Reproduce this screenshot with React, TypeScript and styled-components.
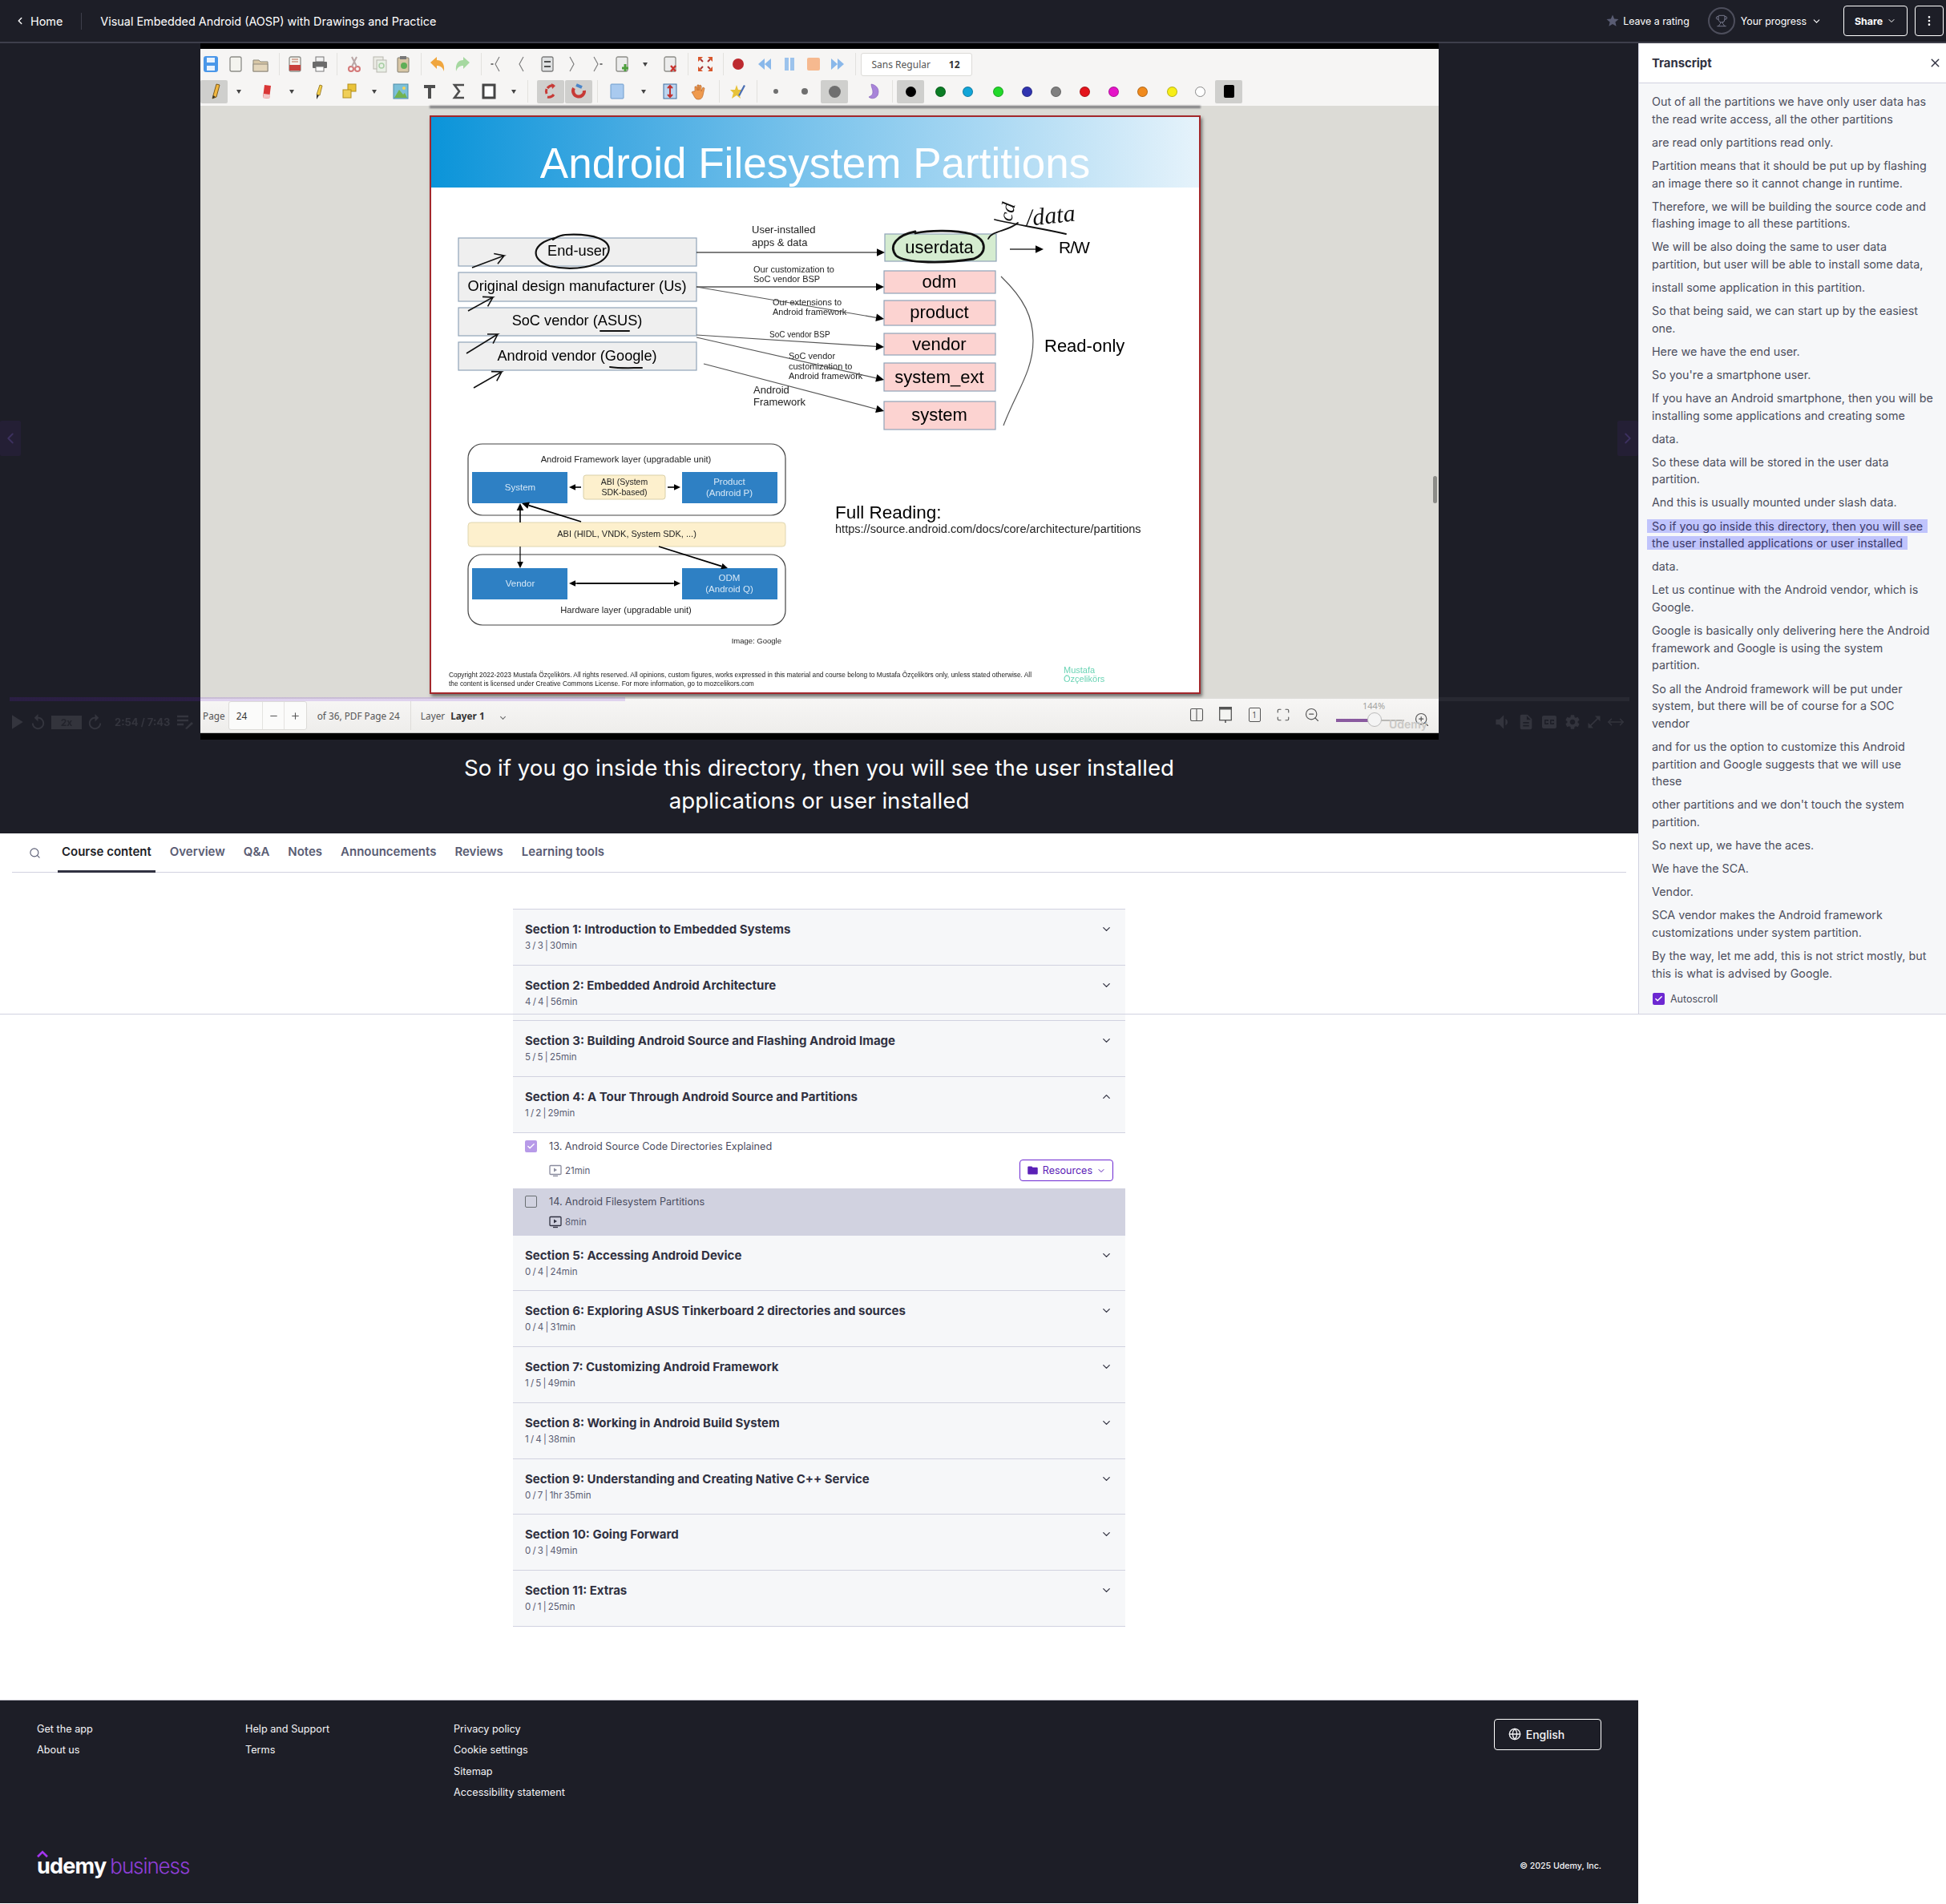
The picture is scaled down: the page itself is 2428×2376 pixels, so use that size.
import React from 'react';
import styled, { createGlobalStyle } from 'styled-components';
import {
  Check,
  ChevronDown,
  ChevronLeft,
  ChevronUp,
  Columns2,
  EllipsisVertical,
  Globe,
  Maximize,
  Minus,
  MoveHorizontal,
  Plus,
  Search,
  Trophy,
  X,
  ZoomIn,
  ZoomOut,
} from 'lucide-react';
import {
  MdClosedCaption,
  MdDescription,
  MdFolder,
  MdOpenInFull,
  MdPlayArrow,
  MdReplay,
  MdSettings,
  MdStar,
  MdVolumeDown,
} from 'react-icons/md';

const DARK = '#1d1e27';
const LINE = '#d1d2e0';
const PURPLE = '#6d28d2';

const GlobalStyle = createGlobalStyle`
  html, body {
    margin: 0;
    background: #fff;
    font-family: Inter, "Noto Sans", sans-serif;
    color: #303141;
  }
  * { box-sizing: border-box; }
`;

/* ---------- pdf app toolbar icons ---------- */

const Page = (fill = '#f4f4ef', stroke = '#8d8d88') => (
  <rect x="4" y="2" width="14" height="18" rx="2" fill={fill} stroke={stroke} strokeWidth="1.3" />
);

const toolIcons: Record<string, React.ReactNode> = {
  save: (
    <>
      <rect x="2" y="1" width="18" height="20" rx="3" fill="#4a97e9" />
      <rect x="6" y="3" width="10" height="6" fill="#eaf3fd" />
      <rect x="6" y="13" width="10" height="6" fill="#eaf3fd" />
    </>
  ),
  page: Page(),
  folder: (
    <>
      <path d="M2 6h7l2 2h9v12H2z" fill="#d8c7a6" stroke="#8f8a7c" />
      <rect x="2" y="11" width="18" height="9" fill="#e4d6bb" stroke="#8f8a7c" />
    </>
  ),
  pdf: (
    <>
      {Page()}
      <rect x="4" y="12" width="14" height="7" fill="#c9413d" />
      <path d="M7 5h8M7 8h8" stroke="#c98" strokeWidth="1.5" />
    </>
  ),
  print: (
    <>
      <rect x="6" y="2" width="10" height="6" fill="#f2f2f2" stroke="#777" />
      <rect x="2" y="8" width="18" height="8" rx="1" fill="#6b6b6b" />
      <rect x="6" y="14" width="10" height="6" fill="#fff" stroke="#777" />
    </>
  ),
  cut: (
    <>
      <circle cx="7" cy="17" r="3" fill="none" stroke="#d47878" strokeWidth="2" />
      <circle cx="15" cy="17" r="3" fill="none" stroke="#d47878" strokeWidth="2" />
      <path d="M8 14 14 2M14 14 8 2" stroke="#b9a6a6" strokeWidth="2" />
    </>
  ),
  copy: (
    <>
      <rect x="3" y="2" width="12" height="15" fill="#ecece6" stroke="#b7b7ae" />
      <rect x="7" y="6" width="12" height="15" fill="#e9efe6" stroke="#b7b7ae" />
      <circle cx="13" cy="13" r="3" fill="none" stroke="#a8cfa4" strokeWidth="1.5" />
    </>
  ),
  paste: (
    <>
      <rect x="4" y="3" width="14" height="18" rx="1" fill="#d8c7a6" stroke="#807a6c" />
      <rect x="7" y="1" width="8" height="4" fill="#777" />
      <circle cx="12" cy="13" r="4" fill="#5fae57" />
    </>
  ),
  undo: <path d="M2 9 10 2v4c6 0 10 4 9 14-2-5-4-7-9-7v4z" fill="#f0a63e" />,
  redo: <path d="M20 9 12 2v4C6 6 2 10 3 20c2-5 4-7 9-7v4z" fill="#a6d8a0" />,
  first: <path d="M15 2 10 11l5 9M5 10.5h2v1H5z" fill="none" stroke="#777" strokeWidth="1.1" />,
  prev: <path d="M14 2 9 11l5 9" fill="none" stroke="#777" strokeWidth="1.1" />,
  next: <path d="m8 2 5 9-5 9" fill="none" stroke="#777" strokeWidth="1.1" />,
  last: <path d="m7 2 5 9-5 9M15 10.5h2v1h-2z" fill="none" stroke="#777" strokeWidth="1.1" />,
  center: (
    <>
      {Page('#dfe1e2', '#7c7c7c')}
      <path d="M7 8h8M15 14H7" stroke="#222" strokeWidth="1.6" />
    </>
  ),
  addPage: (
    <>
      {Page('#ececec')}
      <path d="M15 11v9M11 16h8" stroke="#4e9f3d" strokeWidth="3" />
    </>
  ),
  delPage: (
    <>
      {Page('#ececec')}
      <path d="m12 13 6 7M18 13l-6 7" stroke="#c9332f" strokeWidth="2.4" />
    </>
  ),
  full: (
    <>
      <path d="M2 2h6L2 8zM20 2h-6l6 6zM2 20h6l-6-6zM20 20h-6l6-6z" fill="#d9572b" />
      <path d="m5 5 3 3M17 5l-3 3M5 17l3-3M17 17l-3-3" stroke="#a33" strokeWidth="2" />
    </>
  ),
  record: <circle cx="11" cy="11" r="7" fill="#bd2a2f" />,
  rewind: <path d="M11 4v14L3 11zM19 4v14l-8-7z" fill="#8ab8ea" />,
  pause: <path d="M5 3h5v16H5zM12 3h5v16h-5z" fill="#9cc3ec" />,
  stop: <rect x="3" y="3" width="16" height="16" rx="2" fill="#f6b98f" />,
  forward: <path d="M3 4v14l8-7zM11 4v14l8-7z" fill="#8ab8ea" />,
  pen: (
    <>
      <path d="m9 20 1-4 4-14 4 1-4 15z" fill="#f2b73f" stroke="#7a5a1c" />
      <path d="m9 20 1-4 3 2z" fill="#333" />
    </>
  ),
  eraser: (
    <>
      <path d="m6 19 2-16 8 1-2 16z" fill="#d93636" />
      <path d="m6 19 1-5 8 1-1 5z" fill="#f3c6c6" />
    </>
  ),
  marker: (
    <>
      <path d="m9 15 4-12 3 1-3 12z" fill="#f5cf4a" stroke="#8a6d1c" strokeWidth=".8" />
      <path d="m9 15 3 1-3 5z" fill="#333" />
    </>
  ),
  select: (
    <>
      <rect x="9" y="2" width="10" height="9" fill="#eac339" stroke="#b28f1c" />
      <rect x="3" y="9" width="10" height="10" fill="#f0cf58" stroke="#b28f1c" />
    </>
  ),
  image: (
    <>
      <rect x="2" y="2" width="18" height="18" fill="#7cc0d8" stroke="#4d8ba8" />
      <path d="M3 19 9 9l5 6 2-2 3 6z" fill="#72b34f" />
      <circle cx="15" cy="7" r="2" fill="#f4d35e" />
    </>
  ),
  tee: <path d="M4 3h14v4h-5v13H9V7H4z" fill="#4e4e4e" />,
  sigma: <path d="M17 3H5l6 8-6 8h12" fill="none" stroke="#4e4e4e" strokeWidth="2.6" />,
  shape: <rect x="4" y="3" width="14" height="16" fill="#fff" stroke="#444" strokeWidth="3" />,
  rotate: (
    <>
      <path d="M15 4a8 8 0 0 0-8 3" fill="none" stroke="#c73a36" strokeWidth="3" />
      <path d="M7 18a8 8 0 0 0 8-3M6 8a8 8 0 0 0 0 6" fill="none" stroke="#c73a36" strokeWidth="3" />
      <path d="m12 1 5 3-4 4z" fill="#c73a36" />
    </>
  ),
  magnet: (
    <>
      <path d="M5 7a7 7 0 1 0 13 3" fill="none" stroke="#c73a36" strokeWidth="4" />
      <path d="M8 3l7 3" stroke="#4a85c9" strokeWidth="4" />
    </>
  ),
  blue: <rect x="3" y="2" width="16" height="18" rx="1" fill="#a9caef" stroke="#6f9ccc" />,
  updown: (
    <>
      <rect x="3" y="2" width="16" height="18" fill="#bcd4ef" stroke="#3f6f9f" />
      <path d="M11 4v14M8 7l3-3 3 3M8 15l3 3 3-3" fill="none" stroke="#c0312e" strokeWidth="2" />
    </>
  ),
  hand: (
    <>
      <path d="M5 11V5l2 0 1 5V3h2v7l1-7 2 1v7l2-5 2 1-2 9c-1 4-3 5-6 5s-4-2-6-6l-2-3 2-1z" fill="#ef9a4d" stroke="#b9662a" strokeWidth=".7" />
    </>
  ),
  starPen: (
    <>
      <path d="m9 3 2 6 6 0-5 4 2 7-5-4-6 4 2-7-4-4 6 0z" fill="#e7c23a" />
      <path d="m11 16 7-13 2 1-7 13z" fill="#4b6fb3" />
    </>
  ),
  lasso: <path d="M9 2c7 1 11 7 8 14-2 4-8 5-11 2 2-1 5-2 5-6 0-4-2-6-2-10z" fill="#a884d9" stroke="#7c58b4" strokeWidth=".6" />,
};

type Tool = { c: number; kind: string; active?: boolean; dot?: string; r?: number };

const sep = (c: number): Tool => ({ c, kind: 'sep' });
const caret = (c: number): Tool => ({ c, kind: 'caret' });
const dot = (c: number, color: string, active?: boolean): Tool => ({ c, kind: 'dot', dot: color, active });
const tool = (c: number, kind: string, active?: boolean): Tool => ({ c, kind, active });

const rowOne: Tool[] = [
  tool(263, 'save'), tool(294, 'page'), tool(325, 'folder'), sep(348), tool(368, 'pdf'), tool(399, 'print'), sep(420),
  tool(442, 'cut'), tool(474, 'copy'), tool(503, 'paste'), sep(525), tool(546, 'undo'), tool(577, 'redo'), sep(600),
  tool(619, 'first'), tool(650, 'prev'), tool(683, 'center'), tool(714, 'next'), tool(745, 'last'), tool(776, 'addPage'),
  caret(805), tool(836, 'delPage'), sep(858), tool(880, 'full'), sep(902), tool(921, 'record'), tool(954, 'rewind'),
  tool(985, 'pause'), tool(1015, 'stop'), tool(1045, 'forward'), sep(1067),
];

const rowTwo: Tool[] = [
  tool(267, 'pen', true), caret(298), tool(333, 'eraser'), caret(364), tool(397, 'marker'), tool(436, 'select'), caret(467),
  tool(500, 'image'), tool(536, 'tee'), tool(573, 'sigma'), tool(610, 'shape'), caret(641), sep(658), tool(687, 'rotate', true),
  tool(722, 'magnet', true), sep(745), tool(770, 'blue'), caret(803), tool(836, 'updown'), tool(873, 'hand'), sep(897),
  tool(921, 'starPen'), sep(944), { c: 968, kind: 'size', r: 3 }, { c: 1004, kind: 'size', r: 4 },
  { c: 1041, kind: 'size', r: 7.5, active: true }, tool(1089, 'lasso'), sep(1113), dot(1136, '#000', true), dot(1173, '#0b7d25'),
  dot(1207, '#12a5d8'), dot(1245, '#22d92a'), dot(1281, '#3134b0'), dot(1317, '#808080'), dot(1353, '#e3141c'),
  dot(1389, '#e514c8'), dot(1425, '#f08a1d'), dot(1462, '#f7ee17'), dot(1497, '#fff'), tool(1533, 'black', true),
];

const widthOf = (t: Tool) => {
  if (t.kind === 'sep') return 1;
  if (t.kind === 'caret') return 10;
  if (t.active) return 34;
  return 24;
};

function ToolRow({ items }: { items: Tool[] }) {
  let right = 250;
  return (
    <ToolStrip>
      {items.map((t, i) => {
        const w = widthOf(t);
        const ml = t.c - w / 2 - right;
        right = t.c + w / 2;
        if (t.kind === 'sep') return <ToolSep key={i} $ml={ml} />;
        if (t.kind === 'caret') return <ToolCaret key={i} $ml={ml} />;
        return (
          <ToolFace key={i} $ml={ml} $w={w} $active={t.active}>
            {t.kind === 'black' ? (
              <BlackSwatch />
            ) : t.kind === 'dot' ? (
              <ColorDot $color={t.dot as string} />
            ) : t.kind === 'size' ? (
              <SizeDot $r={t.r as number} />
            ) : (
              <svg width="22" height="22" viewBox="0 0 22 22">
                {toolIcons[t.kind]}
              </svg>
            )}
          </ToolFace>
        );
      })}
    </ToolStrip>
  );
}

/* ---------- the slide diagram ---------- */

function Arrow({ x1, y1, x2, y2, color = '#000', w = 1.2, head = 10 }: { x1: number; y1: number; x2: number; y2: number; color?: string; w?: number; head?: number }) {
  const a = Math.atan2(y2 - y1, x2 - x1);
  const bx = x2 - Math.cos(a) * head;
  const by = y2 - Math.sin(a) * head;
  const nx = -Math.sin(a) * head * 0.48;
  const ny = Math.cos(a) * head * 0.48;
  return (
    <>
      <line x1={x1} y1={y1} x2={bx} y2={by} stroke={color} strokeWidth={w} />
      <polygon points={`${x2},${y2} ${bx + nx},${by + ny} ${bx - nx},${by - ny}`} fill="#000" />
    </>
  );
}

function Stroke({ x1, y1, x2, y2 }: { x1: number; y1: number; x2: number; y2: number }) {
  const a = Math.atan2(y2 - y1, x2 - x1);
  const p = (d: number, s: number) => `${x2 - Math.cos(a + s) * d},${y2 - Math.sin(a + s) * d}`;
  return <polyline points={`${x1},${y1} ${x2},${y2} ${p(13, 0.55)} ${x2},${y2} ${p(13, -0.55)}`} fill="none" stroke="#111" strokeWidth="1.6" />;
}

const actors = [
  { y: 296, h: 35, label: 'End-user', ty: 313 },
  { y: 339, h: 36, label: 'Original design manufacturer (Us)', ty: 357 },
  { y: 383, h: 35, label: 'SoC vendor (ASUS)', ty: 400 },
  { y: 426, h: 35, label: 'Android vendor (Google)', ty: 444 },
];

const partitions = [
  { y: 291, h: 34, x: 1104, w: 139, label: 'userdata', fill: '#d5ecd0', ty: 309 },
  { y: 337, h: 28, x: 1103, w: 139, label: 'odm', fill: '#fcd3d1', ty: 352 },
  { y: 374, h: 31, x: 1103, w: 139, label: 'product', fill: '#fcd3d1', ty: 390 },
  { y: 415, h: 27, x: 1103, w: 139, label: 'vendor', fill: '#fcd3d1', ty: 430 },
  { y: 452, h: 35, x: 1103, w: 139, label: 'system_ext', fill: '#fcd3d1', ty: 471 },
  { y: 500, h: 35, x: 1103, w: 139, label: 'system', fill: '#fcd3d1', ty: 518 },
];

const labels: [number, number, number, string][] = [
  [938, 287, 13, 'User-installed'],
  [938, 303, 13, 'apps & data'],
  [940, 336, 11, 'Our customization to'],
  [940, 348, 11, 'SoC vendor BSP'],
  [964, 377, 11, 'Our extensions to'],
  [964, 389, 11, 'Android framework'],
  [960, 417, 10, 'SoC vendor BSP'],
  [984, 444, 11, 'SoC vendor'],
  [984, 457, 11, 'customization to'],
  [984, 469, 11, 'Android framework'],
  [940, 487, 13, 'Android'],
  [940, 502, 13, 'Framework'],
];

function SlideDiagram() {
  return (
    <svg width="962" height="632" viewBox="536 233 962 632">
      {actors.map(a => (
        <g key={a.label}>
          <rect x="572" y={a.y} width="297" height={a.h} fill="#efefef" stroke="#8fa3b8" strokeWidth="1.2" />
          <DiagramText x="720" y={a.ty} $size={18.2} $anchor="middle">{a.label}</DiagramText>
        </g>
      ))}
      {partitions.map(p => (
        <g key={p.label}>
          <rect x={p.x} y={p.y} width={p.w} height={p.h} fill={p.fill} stroke="#8fa3b8" strokeWidth="1.2" />
          <DiagramText x="1172" y={p.ty} $size={22} $anchor="middle">{p.label}</DiagramText>
        </g>
      ))}
      {labels.map(([x, y, s, t], i) => (
        <DiagramText key={i} x={x} y={y} $size={s} $color="#222">{t}</DiagramText>
      ))}
      <Arrow x1={869} y1={314} x2={1104} y2={314} />
      <Arrow x1={869} y1={357} x2={1103} y2={357} />
      <Arrow x1={869} y1={357} x2={1103} y2={397} color="#555" />
      <Arrow x1={869} y1={417} x2={1103} y2={432} color="#555" />
      <Arrow x1={869} y1={420} x2={1103} y2={473} color="#555" />
      <Arrow x1={878} y1={453} x2={1103} y2={512} color="#555" />
      <Arrow x1={1260} y1={310} x2={1302} y2={310} />
      <path d="M1249 344C1278 372 1289 395 1289 424C1289 462 1268 488 1252 530" fill="none" stroke="#555" strokeWidth="1.2" />
      <DiagramText x="1321" y="309" $size={21} $letter={-1}>R/W</DiagramText>
      <DiagramText x="1303" y="432" $size={22}>Read-only</DiagramText>

      <Hand d="M692 296C664 303 660 322 686 331C712 337 752 334 759 314C764 298 740 290 705 292C700 293 696 293 690 298" $w={2.2} />
      <Hand d="M1142 288C1120 292 1108 305 1118 318C1130 328 1180 328 1215 322C1232 315 1232 298 1212 291C1192 286 1160 286 1142 290" $w={2.8} />
      <Hand d="M1233 297C1238 286 1258 288 1270 277M1241 273C1270 280 1300 284 1330 291" $w={1.8} />
      <Hand d="M749 412H785M761 457C775 459 788 458 801 458" $w={2} />
      <Stroke x1={589} y1={333} x2={629} y2={318} />
      <Stroke x1={584} y1={387} x2={615} y2={370} />
      <Stroke x1={582} y1={440} x2={621} y2={416} />
      <Stroke x1={591} y1={483} x2={626} y2={463} />
      <HandText x="1262" y="276" $size={24} transform="rotate(-78 1262 276)">cd</HandText>
      <HandText x="1281" y="281" $size={30} transform="rotate(-6 1281 281)">/data</HandText>

      <rect x="584" y="553" width="396" height="89" rx="18" fill="#fff" stroke="#444" strokeWidth="1.2" />
      <rect x="584" y="691" width="396" height="88" rx="18" fill="#fff" stroke="#444" strokeWidth="1.2" />
      <DiagramText x="781" y="573" $size={11.2} $anchor="middle" $color="#222">Android Framework layer (upgradable unit)</DiagramText>
      <DiagramText x="781" y="761" $size={11.2} $anchor="middle" $color="#222">Hardware layer (upgradable unit)</DiagramText>
      <rect x="589" y="588" width="119" height="39" fill="#2e80c4" />
      <rect x="851" y="588" width="119" height="39" fill="#2e80c4" />
      <rect x="589" y="708" width="119" height="39" fill="#2e80c4" />
      <rect x="851" y="708" width="119" height="39" fill="#2e80c4" />
      <rect x="728" y="592" width="102" height="30" rx="3" fill="#fdf0cd" stroke="#d9cfa8" />
      <rect x="584" y="651" width="396" height="30" rx="4" fill="#fdf0cd" stroke="#e0d6b0" />
      <DiagramText x="649" y="608" $size={11.5} $anchor="middle" $color="#d6e7f6">System</DiagramText>
      <DiagramText x="910" y="601" $size={11.5} $anchor="middle" $color="#d6e7f6">Product</DiagramText>
      <DiagramText x="910" y="615" $size={11.5} $anchor="middle" $color="#d6e7f6">(Android P)</DiagramText>
      <DiagramText x="649" y="728" $size={11.5} $anchor="middle" $color="#d6e7f6">Vendor</DiagramText>
      <DiagramText x="910" y="721" $size={11.5} $anchor="middle" $color="#d6e7f6">ODM</DiagramText>
      <DiagramText x="910" y="735" $size={11.5} $anchor="middle" $color="#d6e7f6">(Android Q)</DiagramText>
      <DiagramText x="779" y="601" $size={10.5} $anchor="middle" $color="#222">ABI (System</DiagramText>
      <DiagramText x="779" y="614" $size={10.5} $anchor="middle" $color="#222">SDK-based)</DiagramText>
      <DiagramText x="782" y="666" $size={11} $anchor="middle" $color="#222">ABI (HIDL, VNDK, System SDK, ...)</DiagramText>
      <Arrow x1={725} y1={607} x2={710} y2={607} w={1.6} head={8} />
      <Arrow x1={833} y1={607} x2={849} y2={607} w={1.6} head={8} />
      <Arrow x1={649} y1={651} x2={649} y2={627} w={1.6} head={9} />
      <Arrow x1={725} y1={650} x2={651} y2={627} w={1.8} head={9} />
      <Arrow x1={649} y1={681} x2={649} y2={708} w={1.2} head={8} />
      <Arrow x1={822} y1={681} x2={908} y2={708} w={1.8} head={8} />
      <Arrow x1={720} y1={727} x2={849} y2={727} w={1.6} head={8} />
      <Arrow x1={840} y1={727} x2={710} y2={727} w={1.6} head={8} />
      <DiagramText x="975" y="799" $size={9.5} $anchor="end" $color="#222">Image: Google</DiagramText>
      <DiagramText x="1042" y="640" $size={22.5}>Full Reading:</DiagramText>
      <DiagramText x="1042" y="660" $size={14.55} $color="#222">https://source.android.com/docs/core/architecture/partitions</DiagramText>
      <DiagramText x="560" y="842" $size={8.36} $color="#222">Copyright 2022-2023 Mustafa Özçelikörs. All rights reserved. All opinions, custom figures, works expressed in this material and course belong to Mustafa Özçelikörs only, unless stated otherwise. All</DiagramText>
      <DiagramText x="560" y="853" $size={8.36} $color="#222">the content is licensed under Creative Commons License. For more information, go to mozcelikors.com</DiagramText>
      <DiagramText x="1327" y="836" $size={11} $color="#6bd4b5">Mustafa</DiagramText>
      <DiagramText x="1327" y="847" $size={11} $color="#6bd4b5">Özçelikörs</DiagramText>
    </svg>
  );
}

/* ---------- data ---------- */

const tabs = ['Course content', 'Overview', 'Q&A', 'Notes', 'Announcements', 'Reviews', 'Learning tools'];

type Lecture = { title: string; length: string; done?: boolean; current?: boolean };
type Section = { title: string; meta: string; lectures?: Lecture[] };

const sections: Section[] = [
  { title: 'Section 1: Introduction to Embedded Systems', meta: '3 / 3 | 30min' },
  { title: 'Section 2: Embedded Android Architecture', meta: '4 / 4 | 56min' },
  { title: 'Section 3: Building Android Source and Flashing Android Image', meta: '5 / 5 | 25min' },
  {
    title: 'Section 4: A Tour Through Android Source and Partitions',
    meta: '1 / 2 | 29min',
    lectures: [
      { title: '13. Android Source Code Directories Explained', length: '21min', done: true },
      { title: '14. Android Filesystem Partitions', length: '8min', current: true },
    ],
  },
  { title: 'Section 5: Accessing Android Device', meta: '0 / 4 | 24min' },
  { title: 'Section 6: Exploring ASUS Tinkerboard 2 directories and sources', meta: '0 / 4 | 31min' },
  { title: 'Section 7: Customizing Android Framework', meta: '1 / 5 | 49min' },
  { title: 'Section 8: Working in Android Build System', meta: '1 / 4 | 38min' },
  { title: 'Section 9: Understanding and Creating Native C++ Service', meta: '0 / 7 | 1hr 35min' },
  { title: 'Section 10: Going Forward', meta: '0 / 3 | 49min' },
  { title: 'Section 11: Extras', meta: '0 / 1 | 25min' },
];

const cues: { lines: string[]; current?: boolean }[] = [
  { lines: ['Out of all the partitions we have only user data has', 'the read write access, all the other partitions'] },
  { lines: ['are read only partitions read only.'] },
  { lines: ['Partition means that it should be put up by flashing', 'an image there so it cannot change in runtime.'] },
  { lines: ['Therefore, we will be building the source code and', 'flashing image to all these partitions.'] },
  { lines: ['We will be also doing the same to user data', 'partition, but user will be able to install some data,'] },
  { lines: ['install some application in this partition.'] },
  { lines: ['So that being said, we can start up by the easiest', 'one.'] },
  { lines: ['Here we have the end user.'] },
  { lines: ["So you're a smartphone user."] },
  { lines: ['If you have an Android smartphone, then you will be', 'installing some applications and creating some'] },
  { lines: ['data.'] },
  { lines: ['So these data will be stored in the user data', 'partition.'] },
  { lines: ['And this is usually mounted under slash data.'] },
  { lines: ['So if you go inside this directory, then you will see', 'the user installed applications or user installed'], current: true },
  { lines: ['data.'] },
  { lines: ['Let us continue with the Android vendor, which is', 'Google.'] },
  { lines: ['Google is basically only delivering here the Android', 'framework and Google is using the system', 'partition.'] },
  { lines: ['So all the Android framework will be put under', 'system, but there will be of course for a SOC', 'vendor'] },
  { lines: ['and for us the option to customize this Android', 'partition and Google suggests that we will use', 'these'] },
  { lines: ["other partitions and we don't touch the system", 'partition.'] },
  { lines: ['So next up, we have the aces.'] },
  { lines: ['We have the SCA.'] },
  { lines: ['Vendor.'] },
  { lines: ['SCA vendor makes the Android framework', 'customizations under system partition.'] },
  { lines: ['By the way, let me add, this is not strict mostly, but', 'this is what is advised by Google.'] },
];

const footerColumns = [
  ['Get the app', 'About us'],
  ['Help and Support', 'Terms'],
  ['Privacy policy', 'Cookie settings', 'Sitemap', 'Accessibility statement'],
];

function LectureIcon({ strong }: { strong?: boolean }) {
  const c = strong ? '#303141' : '#8a8c9e';
  return (
    <svg width="16" height="16" viewBox="0 0 16 16">
      <rect x="1" y="1.5" width="14" height="11" rx="1" fill="none" stroke={c} strokeWidth="1.3" />
      <path d="M6 4.5v5l4-2.5z" fill={c} />
      <path d="M5 14.5h6" stroke={c} strokeWidth="1.3" />
    </svg>
  );
}

function NotesIcon() {
  return (
    <svg width="22" height="20" viewBox="0 0 22 20">
      <path d="M1 3h14M1 8h14M1 13h8" stroke="#34353e" strokeWidth="2.4" />
      <path d="m11 18 8-8 2 2-8 7z" fill="#34353e" />
    </svg>
  );
}

function PresentationIcon() {
  return (
    <svg width="20" height="24" viewBox="0 0 20 24">
      <rect x="2.7" y="2.7" width="14.6" height="16" fill="#f4f4f2" stroke="#555" strokeWidth="1.3" />
      <rect x="2" y="2" width="16" height="3.5" fill="#555" />
      <path d="M10 19v3" stroke="#555" strokeWidth="1.6" />
    </svg>
  );
}

export default function App() {
  return (
    <>
      <GlobalStyle />
      <Shell>
        <TopBar>
          <BackLink>
            <ChevronLeft size={14} strokeWidth={2.4} />
            Home
          </BackLink>
          <TopDivider />
          <CourseTitle>Visual Embedded Android (AOSP) with Drawings and Practice</CourseTitle>
          <TopActions>
            <RatingLink>
              <MdStar size={18} color="#595c73" />
              Leave a rating
            </RatingLink>
            <ProgressLink>
              <ProgressRing>
                <Trophy size={16} color="#7c7e92" strokeWidth={1.4} />
              </ProgressRing>
              Your progress
              <ChevronDown size={13} />
            </ProgressLink>
            <OutlineButton $w={80} $ml={31}>
              Share
              <ChevronDown size={12} />
            </OutlineButton>
            <OutlineButton $w={36} $ml={9}>
              <EllipsisVertical size={16} />
            </OutlineButton>
          </TopActions>
        </TopBar>

        <Body>
          <Main>
            <Stage>
              <PdfWindow>
                <ToolBar>
                  <FontRow>
                    <ToolRow items={rowOne} />
                    <FontBox>
                      <span>Sans Regular</span>
                      <b>12</b>
                    </FontBox>
                  </FontRow>
                  <ToolRow items={rowTwo} />
                </ToolBar>
                <Canvas>
                  <PrevPageEdge />
                  <Slide>
                    <SlideHead>Android Filesystem Partitions</SlideHead>
                    <SlideDiagram />
                  </Slide>
                  <ScrollThumb />
                </Canvas>
                <PdfStatus>
                  <StatusText $ml={3}>Page</StatusText>
                  <PageBox>
                    <PageValue>24</PageValue>
                    <PageStep><Minus size={13} /></PageStep>
                    <PageStep><Plus size={13} /></PageStep>
                  </PageBox>
                  <StatusText $ml={13}>of 36, PDF Page 24</StatusText>
                  <StatusDivider />
                  <StatusText $ml={12}>Layer</StatusText>
                  <StatusText $ml={7} $bold>Layer 1</StatusText>
                  <StatusCaret />
                  <StatusIcons>
                    <StatusIcon><Columns2 size={20} strokeWidth={1.3} /></StatusIcon>
                    <StatusIcon><PresentationIcon /></StatusIcon>
                    <StatusIcon><NumberIcon>1</NumberIcon></StatusIcon>
                    <StatusIcon><Maximize size={18} strokeWidth={1.5} /></StatusIcon>
                    <StatusIcon><ZoomOut size={20} strokeWidth={1.4} /></StatusIcon>
                  </StatusIcons>
                  <ZoomSlider>
                    <ZoomPercent>144%</ZoomPercent>
                    <ZoomFill />
                    <ZoomKnob />
                    <Watermark>Udemy</Watermark>
                  </ZoomSlider>
                  <ZoomInHolder>
                    <ZoomIn size={20} strokeWidth={1.4} />
                  </ZoomInHolder>
                </PdfStatus>
              </PdfWindow>
              <Caption>
                So if you go inside this directory, then you will see the user installed
                <br />
                applications or user installed
              </Caption>

              <NavButton $side="left"><ChevronLeft size={22} /></NavButton>
              <NavButton $side="right"><FlipChevron size={22} /></NavButton>
              <Progress />
              <PlayerLeft>
                <MdPlayArrow size={30} />
                <BackReplay size={23} />
                <SpeedChip>2x</SpeedChip>
                <FlipReplay size={23} />
                <TimeText>2:54 / 7:43</TimeText>
                <NotesIcon />
              </PlayerLeft>
              <PlayerRight>
                <MdVolumeDown size={26} />
                <MdDescription size={22} />
                <MdClosedCaption size={24} />
                <MdSettings size={22} />
                <MdOpenInFull size={20} />
                <MoveHorizontal size={22} strokeWidth={1.6} />
              </PlayerRight>
            </Stage>

            <TabBar>
              <SearchSlot>
                <Search size={15} strokeWidth={1.8} />
              </SearchSlot>
              {tabs.map((t, i) => (
                <Tab key={t} $active={i === 0}>{t}</Tab>
              ))}
            </TabBar>

            <SectionList>
              {sections.map(s => (
                <div key={s.title}>
                  <SectionHead>
                    <SectionTitle>{s.title}</SectionTitle>
                    <SectionMeta>{s.meta}</SectionMeta>
                    <SectionChevron>
                      {s.lectures ? <ChevronUp size={15} /> : <ChevronDown size={15} />}
                    </SectionChevron>
                  </SectionHead>
                  {s.lectures?.map(l => (
                    <LectureRow key={l.title} $current={l.current}>
                      <LectureCheck $done={l.done}>
                        {l.done && <Check size={11} color="#fff" strokeWidth={3} />}
                      </LectureCheck>
                      <LectureBody>
                        <LectureTitle>{l.title}</LectureTitle>
                        <LectureMeta $tight={l.current}>
                          <LectureIcon strong={l.current} />
                          <span>{l.length}</span>
                          {l.done && (
                            <ResourceButton>
                              <MdFolder size={15} />
                              Resources
                              <ChevronDown size={12} />
                            </ResourceButton>
                          )}
                        </LectureMeta>
                      </LectureBody>
                    </LectureRow>
                  ))}
                </div>
              ))}
            </SectionList>

            <Footer>
              <FooterTop>
                <FooterColumns>
                  {footerColumns.map((col, i) => (
                    <FooterColumn key={i}>
                      {col.map(link => <FooterLink key={link}>{link}</FooterLink>)}
                    </FooterColumn>
                  ))}
                </FooterColumns>
                <LanguageButton>
                  <Globe size={16} />
                  English
                </LanguageButton>
              </FooterTop>
              <FooterBottom>
                <Logo>
                  <LogoCaret width="14" height="9" viewBox="0 0 14 9">
                    <path d="M1 8 7 2l6 6" fill="none" stroke="#a435f0" strokeWidth="2.6" />
                  </LogoCaret>
                  <LogoWord>udemy</LogoWord>
                  <LogoBusiness>business</LogoBusiness>
                </Logo>
                <Copyright>© 2025 Udemy, Inc.</Copyright>
              </FooterBottom>
            </Footer>
          </Main>

          <Transcript>
            <TranscriptHead>
              <TranscriptTitle>Transcript</TranscriptTitle>
              <X size={17} color="#303141" />
            </TranscriptHead>
            <CueList>
              {cues.map((cue, i) => (
                <Cue key={i}>
                  <CueText $current={cue.current}>
                    {cue.lines.map((line, j) => (
                      <React.Fragment key={j}>
                        {j > 0 && <br />}
                        {line}
                      </React.Fragment>
                    ))}
                  </CueText>
                </Cue>
              ))}
            </CueList>
            <AutoscrollRow>
              <AutoscrollBox>
                <Check size={11} color="#fff" strokeWidth={3} />
              </AutoscrollBox>
              Autoscroll
            </AutoscrollRow>
          </Transcript>
        </Body>
        <ViewportEdge />
      </Shell>
    </>
  );
}

/* ---------- styles ---------- */

const Shell = styled.div`
  position: relative;
  width: 2428px;
  height: 2376px;
  overflow: hidden;
`;

const TopBar = styled.header`
  display: flex;
  align-items: center;
  height: 54px;
  padding: 0 3px 0 18px;
  background: ${DARK};
  border-bottom: 2px solid #3e3f4b;
  color: #fff;
`;

const BackLink = styled.div`
  display: flex;
  align-items: center;
  gap: 6px;
  font-size: 14.4px;
`;

const TopDivider = styled.div`
  width: 1px;
  height: 21px;
  margin: 0 23px 0 23px;
  background: #3e3f4b;
`;

const CourseTitle = styled.div`
  font-size: 14.4px;
`;

const TopActions = styled.div`
  display: flex;
  align-items: center;
  margin-left: auto;
  font-size: 12.4px;
`;

const RatingLink = styled.div`
  display: flex;
  align-items: center;
  gap: 4px;
`;

const ProgressLink = styled.div`
  display: flex;
  align-items: center;
  gap: 6px;
  margin-left: 23px;
  margin-right: -4px;
`;

const ProgressRing = styled.div`
  display: flex;
  align-items: center;
  justify-content: center;
  width: 34px;
  height: 34px;
  margin-right: 1px;
  border: 2px solid #4d4e5c;
  border-radius: 50%;
`;

const OutlineButton = styled.div<{ $w: number; $ml: number }>`
  display: flex;
  align-items: center;
  justify-content: center;
  gap: 5px;
  width: ${p => p.$w}px;
  height: 38px;
  margin-left: ${p => p.$ml}px;
  border: 1px solid #fff;
  border-radius: 4px;
  font-weight: 700;
`;

const Body = styled.div`
  display: flex;
  align-items: flex-start;
`;

const Main = styled.main`
  width: 2044px;
`;

const Stage = styled.section`
  position: relative;
  display: flex;
  flex-direction: column;
  align-items: center;
  height: 986px;
  background: ${DARK};
`;

const PdfWindow = styled.div`
  display: flex;
  flex-direction: column;
  width: 1545px;
  height: 869px;
  margin-left: 1px;
  background: #dcdbd6;
  border-top: 7px solid #000;
  border-bottom: 8px solid #000;
`;

const ToolBar = styled.div`
  height: 71px;
  padding-top: 2px;
  background: #f6f5f4;
`;

const FontRow = styled.div`
  display: flex;
  align-items: center;
`;

const ToolStrip = styled.div`
  display: flex;
  align-items: center;
  height: 34px;
`;

const ToolFace = styled.div<{ $ml: number; $w: number; $active?: boolean }>`
  display: flex;
  flex: none;
  align-items: center;
  justify-content: center;
  width: ${p => p.$w}px;
  height: 29px;
  margin-left: ${p => p.$ml}px;
  border-radius: 2px;
  background: ${p => (p.$active ? '#cfcfcd' : 'transparent')};
`;

const ToolSep = styled.div<{ $ml: number }>`
  flex: none;
  width: 1px;
  height: 28px;
  margin-left: ${p => p.$ml}px;
  background: #e2e1de;
`;

const ToolCaret = styled.div<{ $ml: number }>`
  flex: none;
  width: 0;
  height: 0;
  margin-left: ${p => p.$ml + 2}px;
  margin-right: 2px;
  border-left: 3.5px solid transparent;
  border-right: 3.5px solid transparent;
  border-top: 5px solid #444;
`;

const ColorDot = styled.div<{ $color: string }>`
  width: 13px;
  height: 13px;
  border-radius: 50%;
  background: ${p => p.$color};
  border: 1px solid ${p => (p.$color === '#fff' ? '#888' : 'rgba(0,0,0,.25)')};
`;

const SizeDot = styled.div<{ $r: number }>`
  width: ${p => p.$r * 2}px;
  height: ${p => p.$r * 2}px;
  border-radius: 50%;
  background: #6f6f6f;
`;

const BlackSwatch = styled.div`
  width: 13px;
  height: 16px;
  border-radius: 2px;
  background: #000;
`;

const FontBox = styled.div`
  display: flex;
  align-items: center;
  justify-content: space-between;
  width: 139px;
  height: 29px;
  margin-left: 6px;
  padding: 0 14px 0 13px;
  background: #fff;
  border: 1px solid #dcdbd8;
  border-radius: 3px;
  color: #555;
  font-family: 'Noto Sans', sans-serif;
  font-size: 12px;

  b {
    color: #333;
  }
`;

const Canvas = styled.div`
  position: relative;
  display: flex;
  flex: 1;
  flex-direction: column;
  align-items: center;
  padding-right: 11px;
  background: #dcdbd6;
`;

const PrevPageEdge = styled.div`
  width: 962px;
  height: 3px;
  background: #77767a;
  filter: blur(1px);
`;

const Slide = styled.div`
  width: 962px;
  height: 722px;
  margin-top: 9px;
  background: #fff;
  outline: 2px solid #a3282c;
  outline-offset: -2px;
  box-shadow: 2px 3px 4px rgba(0, 0, 0, 0.5);
  filter: blur(0.35px);
`;

const SlideHead = styled.div`
  display: flex;
  align-items: center;
  justify-content: center;
  height: 90px;
  padding: 28px 0 0;
  background: linear-gradient(90deg, #0a94d9 0%, #44aae2 25%, #7cc4ec 50%, #a9d8f3 72%, #e6f3fb 100%);
  color: #fff;
  font-family: 'Liberation Sans', sans-serif;
  font-size: 53px;
`;

const DiagramText = styled.text<{ $size: number; $anchor?: string; $color?: string; $letter?: number }>`
  font-family: 'Liberation Sans', sans-serif;
  font-size: ${p => p.$size}px;
  text-anchor: ${p => p.$anchor ?? 'start'};
  fill: ${p => p.$color ?? '#000'};
  letter-spacing: ${p => p.$letter ?? 0}px;
  dominant-baseline: middle;
`;

const HandText = styled.text<{ $size: number }>`
  font-family: 'Liberation Serif', serif;
  font-style: italic;
  font-size: ${p => p.$size}px;
  fill: #111;
`;

const Hand = styled.path<{ $w: number }>`
  fill: none;
  stroke: #111;
  stroke-width: ${p => p.$w}px;
  stroke-linecap: round;
`;

const ScrollThumb = styled.div`
  position: absolute;
  top: 462px;
  right: 2px;
  width: 5px;
  height: 34px;
  border-radius: 3px;
  background: #8c8c88;
`;

const PdfStatus = styled.div`
  position: relative;
  display: flex;
  align-items: center;
  height: 43px;
  background: linear-gradient(#f7f6f5, #eeedeb);
  border-bottom: 1px solid #bbb;
  color: #555;
  font-family: 'Noto Sans', sans-serif;
  font-size: 11.8px;
`;

const StatusText = styled.span<{ $ml: number; $bold?: boolean }>`
  margin-left: ${p => p.$ml}px;
  font-weight: ${p => (p.$bold ? 700 : 400)};
  color: ${p => (p.$bold ? '#333' : '#555')};
`;

const PageBox = styled.div`
  display: flex;
  height: 36px;
  width: 98px;
  margin-left: 4px;
  background: #fbfbfa;
  border: 1px solid #dcdbd8;
  border-radius: 3px;
`;

const PageValue = styled.div`
  display: flex;
  align-items: center;
  width: 42px;
  padding-left: 9px;
  color: #333;
`;

const PageStep = styled.div`
  display: flex;
  align-items: center;
  justify-content: center;
  width: 28px;
  border-left: 1px solid #e4e3e0;
`;

const StatusDivider = styled.div`
  width: 1px;
  height: 36px;
  margin-left: 13px;
  background: #dedcd9;
`;

const StatusCaret = styled.div`
  width: 5px;
  height: 5px;
  margin: 2px 0 0 20px;
  border-right: 1px solid #666;
  border-bottom: 1px solid #666;
  transform: rotate(45deg);
`;

const StatusIcons = styled.div`
  display: flex;
  align-items: center;
  margin-left: auto;
  margin-right: 12px;
  padding-bottom: 2px;
`;

const StatusIcon = styled.div`
  display: flex;
  align-items: center;
  justify-content: center;
  width: 36px;
`;

const NumberIcon = styled.div`
  display: flex;
  align-items: center;
  justify-content: center;
  width: 15px;
  height: 18px;
  border: 1.5px solid #555;
  border-radius: 2px;
  font-size: 10px;
`;

const ZoomSlider = styled.div`
  position: relative;
  width: 85px;
  height: 2px;
  margin: 12px 12px 0 0;
  background: #b9b8b5;
`;

const ZoomPercent = styled.span`
  position: absolute;
  top: -25px;
  left: 33px;
  color: #a3a3a0;
  font-size: 11px;
`;

const ZoomFill = styled.div`
  position: absolute;
  top: -1px;
  left: 0;
  width: 40px;
  height: 4px;
  background: #8a5a9f;
`;

const ZoomKnob = styled.div`
  position: absolute;
  top: -9px;
  left: 39px;
  width: 18px;
  height: 18px;
  border-radius: 50%;
  background: #f4f4f4;
  border: 1px solid #bbb;
`;

const Watermark = styled.span`
  position: absolute;
  top: -3px;
  left: 66px;
  color: #c9c8c5;
  font-family: Inter, sans-serif;
  font-size: 14px;
  font-weight: 600;
`;

const ZoomInHolder = styled.div`
  display: flex;
  margin: 10px 11px 0 0;
`;

const Caption = styled.div`
  padding-top: 15px;
  color: #fff;
  font-size: 27.7px;
  line-height: 41px;
  text-align: center;
`;

const NavButton = styled.div<{ $side: 'left' | 'right' }>`
  position: absolute;
  top: 471px;
  ${p => p.$side}: 0;
  display: flex;
  align-items: center;
  justify-content: center;
  width: 26px;
  height: 44px;
  background: #241f35;
  border-radius: 2px;
  color: #3d3160;
`;

const FlipChevron = styled(ChevronLeft)`
  transform: scaleX(-1);
`;

const Progress = styled.div`
  position: absolute;
  top: 816px;
  left: 12px;
  width: 2021px;
  height: 5px;
  background: linear-gradient(
    90deg,
    rgba(109, 40, 210, 0.17) 0,
    rgba(109, 40, 210, 0.17) 38%,
    rgba(255, 255, 255, 0.05) 38%,
    rgba(255, 255, 255, 0.05) 100%
  );
`;

const PlayerLeft = styled.div`
  position: absolute;
  top: 833px;
  left: 5px;
  display: flex;
  align-items: center;
  gap: 5px;
  height: 28px;
  color: #34353e;
`;

const BackReplay = styled(MdReplay)`
  margin-left: -4px;
`;

const FlipReplay = styled(MdReplay)`
  transform: scaleX(-1);
`;

const SpeedChip = styled.div`
  display: flex;
  align-items: center;
  justify-content: center;
  width: 38px;
  height: 17px;
  background: #33343c;
  color: #23242c;
  font-size: 12px;
  font-weight: 700;
`;

const TimeText = styled.span`
  margin: 0 3px 0 8px;
  color: #34353e;
  font-size: 13px;
  font-weight: 700;
`;

const PlayerRight = styled.div`
  position: absolute;
  top: 834px;
  right: 17px;
  display: flex;
  align-items: center;
  gap: 6px;
  height: 26px;
  color: #33343d;
`;

const TabBar = styled.nav`
  display: flex;
  align-items: stretch;
  height: 49px;
  margin: 0 15px;
  border-bottom: 1px solid ${LINE};
`;

const SearchSlot = styled.div`
  display: flex;
  align-items: center;
  justify-content: center;
  width: 57px;
  color: #595c73;
`;

const Tab = styled.div<{ $active?: boolean }>`
  display: flex;
  align-items: center;
  height: 49px;
  margin-right: 13px;
  padding: 0 5px 1px;
  border-bottom: ${p => (p.$active ? '3px solid #303141' : '3px solid transparent')};
  color: ${p => (p.$active ? '#1d1e27' : '#595c73')};
  font-size: 15px;
  font-weight: 600;
`;

const SectionList = styled.div`
  width: 764px;
  margin: 45px 0 91px 640px;
  border-top: 1px solid ${LINE};
`;

const SectionHead = styled.div`
  position: relative;
  height: 69.7px;
  padding: 15px 15px 0;
  background: #f6f7f9;
  border-bottom: 1px solid ${LINE};
`;

const SectionTitle = styled.div`
  color: #303141;
  font-size: 15px;
  font-weight: 700;
  line-height: 20px;
`;

const SectionMeta = styled.div`
  margin-top: 1px;
  color: #595c73;
  font-size: 11.5px;
  line-height: 18px;
  word-spacing: -1px;
`;

const SectionChevron = styled.div`
  position: absolute;
  top: 17px;
  right: 16px;
  display: flex;
  color: #303141;
`;

const LectureRow = styled.div<{ $current?: boolean }>`
  display: flex;
  gap: 15px;
  height: ${p => (p.$current ? 59 : 69)}px;
  padding: 8px 15px 0;
  background: ${p => (p.$current ? LINE : '#fff')};
`;

const LectureCheck = styled.div<{ $done?: boolean }>`
  display: flex;
  flex: none;
  align-items: center;
  justify-content: center;
  width: 15px;
  height: 15px;
  margin-top: 1px;
  border: ${p => (p.$done ? '0' : '1.5px solid #6a6f73')};
  border-radius: 2px;
  background: ${p => (p.$done ? '#b79ae8' : 'transparent')};
`;

const LectureBody = styled.div`
  flex: 1;
`;

const LectureTitle = styled.div`
  color: #4a4c5e;
  font-size: 12.65px;
  line-height: 17px;
`;

const LectureMeta = styled.div<{ $tight?: boolean }>`
  display: flex;
  align-items: center;
  gap: 4px;
  height: 28px;
  margin-top: ${p => (p.$tight ? 3 : 8)}px;
  color: #595c73;
  font-size: 11.5px;
`;

const ResourceButton = styled.div`
  display: flex;
  align-items: center;
  gap: 5px;
  height: 27px;
  margin-left: auto;
  padding: 0 8px;
  background: #fff;
  border: 1px solid ${PURPLE};
  border-radius: 4px;
  color: #5b21b6;
  font-size: 12.5px;
`;

const Footer = styled.footer`
  display: flex;
  flex-direction: column;
  justify-content: space-between;
  height: 254px;
  padding: 27px 46px 30px;
  background: ${DARK};
  border-top: 1px solid #c9c9d2;
  color: #f5f5f7;
`;

const FooterTop = styled.div`
  display: flex;
  justify-content: space-between;
`;

const FooterColumns = styled.div`
  display: grid;
  grid-template-columns: repeat(3, 260px);
`;

const FooterColumn = styled.div`
  display: flex;
  flex-direction: column;
  gap: 9.5px;
`;

const FooterLink = styled.div`
  font-size: 12.7px;
  line-height: 17px;
`;

const LanguageButton = styled.div`
  display: flex;
  align-items: center;
  justify-content: center;
  gap: 6px;
  width: 134px;
  height: 39px;
  margin-top: -4px;
  border: 1px solid #fff;
  border-radius: 4px;
  padding-right: 28px;
  font-size: 14px;
  font-weight: 500;
`;

const FooterBottom = styled.div`
  display: flex;
  align-items: center;
  justify-content: space-between;
`;

const Logo = styled.div`
  position: relative;
  display: flex;
  align-items: baseline;
  gap: 5px;
`;

const LogoCaret = styled.svg`
  position: absolute;
  top: -3px;
  left: 0;
`;

const LogoWord = styled.span`
  color: #fff;
  font-size: 27px;
  font-weight: 700;
  letter-spacing: -0.8px;
`;

const LogoBusiness = styled.span`
  color: #8f3fd8;
  font-size: 26px;
  font-weight: 300;
  letter-spacing: -1.1px;
`;

const Copyright = styled.div`
  font-size: 10.6px;
  font-weight: 500;
`;

const Transcript = styled.aside`
  display: flex;
  flex-direction: column;
  width: 384px;
  height: 1212px;
  background: #f6f7f9;
  border-left: 1px solid ${LINE};
  border-bottom: 1px solid ${LINE};
`;

const TranscriptHead = styled.div`
  display: flex;
  align-items: center;
  justify-content: space-between;
  height: 50px;
  padding: 0 5px 0 16px;
  background: #fff;
  border-bottom: 1px solid ${LINE};
`;

const TranscriptTitle = styled.div`
  color: #303141;
  font-size: 14.8px;
  font-weight: 700;
`;

const CueList = styled.div`
  flex: 1;
  padding-top: 12px;
  overflow: hidden;
`;

const Cue = styled.div`
  margin-bottom: 7.35px;
  padding: 0 10px;
  color: #4d4f5e;
  font-size: 14.3px;
  line-height: 21.7px;
  white-space: nowrap;
`;

const CueText = styled.span<{ $current?: boolean }>`
  padding: 0 6px;
  background: ${p => (p.$current ? '#c0c4fc' : 'transparent')};
  color: ${p => (p.$current ? '#3b3a6b' : 'inherit')};
  box-decoration-break: clone;
  -webkit-box-decoration-break: clone;
`;

const AutoscrollRow = styled.div`
  display: flex;
  align-items: center;
  gap: 7px;
  height: 36px;
  padding: 0 0 2px 17px;
  color: #4d4f5e;
  font-size: 12.5px;
`;

const AutoscrollBox = styled.div`
  display: flex;
  align-items: center;
  justify-content: center;
  width: 15px;
  height: 15px;
  border-radius: 2px;
  background: ${PURPLE};
`;

const ViewportEdge = styled.div`
  position: absolute;
  top: 1265px;
  left: 0;
  right: 0;
  height: 1px;
  background: ${LINE};
`;
